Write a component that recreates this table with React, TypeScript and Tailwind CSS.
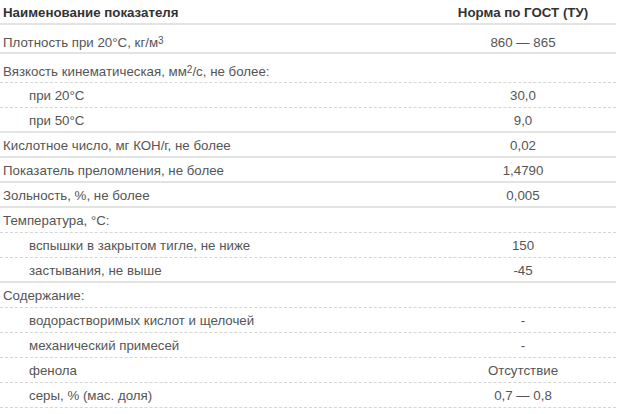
import React from "react";

type Row = {
  name: React.ReactNode;
  value?: string;
  sub?: boolean;
  tall?: boolean;
  dashed?: boolean;
};

const rows: Row[] = [
  {
    name: (
      <>
        Плотность при 20°C, кг/м<sup className="text-[10px] relative -top-[3px]">3</sup>
      </>
    ),
    value: "860 — 865",
    tall: true,
  },
  {
    name: (
      <>
        Вязкость кинематическая, мм<sup className="text-[10px] relative -top-[3px]">2</sup>/с, не более:
      </>
    ),
    tall: true,
    dashed: true,
  },
  { name: "при 20°C", value: "30,0", sub: true, dashed: true },
  { name: "при 50°C", value: "9,0", sub: true },
  { name: "Кислотное число, мг КОН/г, не более", value: "0,02" },
  { name: "Показатель преломления, не более", value: "1,4790" },
  { name: "Зольность, %, не более", value: "0,005" },
  { name: "Температура, °C:", dashed: true },
  { name: "вспышки в закрытом тигле, не ниже", value: "150", sub: true, dashed: true },
  { name: "застывания, не выше", value: "-45", sub: true },
  { name: "Содержание:", dashed: true },
  { name: "водорастворимых кислот и щелочей", value: "-", sub: true, dashed: true },
  { name: "механический примесей", value: "-", sub: true, dashed: true },
  { name: "фенола", value: "Отсутствие", sub: true, dashed: true },
  { name: "серы, % (мас. доля)", value: "0,7 — 0,8", sub: true, dashed: true },
];

export default function App() {
  return (
    <div className="w-[624px] h-[414px] bg-white overflow-hidden font-['Liberation_Sans',Arial,sans-serif] text-[13.3px] text-[#555]">
      <div className="w-[616px]">
        <div className="flex h-[25px] items-center pt-[2px] border-b-2 border-[#e3e3e3] font-bold text-[#333]">
          <div className="flex-1 pl-[3px]">Наименование показателя</div>
          <div className="w-[186px] text-center">Норма по ГОСТ (ТУ)</div>
        </div>
        {rows.map((r, i) => (
          <div
            key={i}
            className={
              "flex items-center " +
              (r.tall ? "h-[29px] pt-[8px] " : "h-[25px] pt-[2px] ") +
              (r.dashed ? "border-b border-dashed border-[#d6d6d6]" : "border-b-2 border-[#e3e3e3]")
            }
          >
            <div className={"flex-1 leading-none " + (r.sub ? "pl-[29px]" : "pl-[3px]")}>{r.name}</div>
            <div className="w-[186px] text-center">{r.value}</div>
          </div>
        ))}
      </div>
    </div>
  );
}
